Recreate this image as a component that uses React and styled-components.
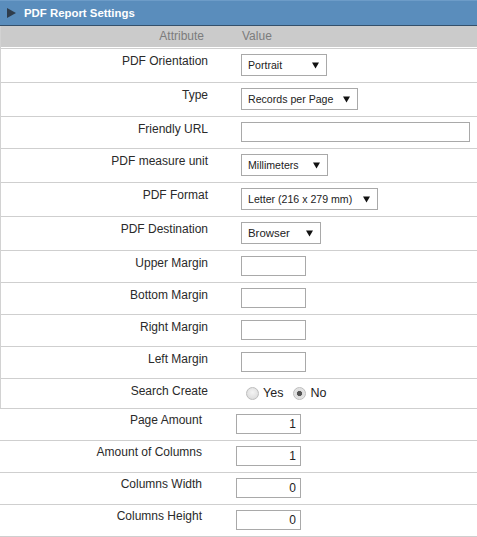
import React from "react";
import styled, { createGlobalStyle } from "styled-components";

const Global = createGlobalStyle`
  html, body { margin: 0; padding: 0; background: #ffffff; }
  body { font-family: "Liberation Sans", Arial, sans-serif; font-size: 12px; color: #222; }
`;

const Panel = styled.div`
  width: 477px;
`;

const TitleBar = styled.div`
  display: flex;
  align-items: center;
  gap: 8px;
  padding-left: 7px;
  background: #5a8dbc;
  border-top: 1px solid #6d9cc8;
  border-bottom: 1px solid #34506b;
  box-sizing: border-box;
  height: 26px;
`;

const TitleText = styled.span`
  color: #ffffff;
  font-weight: bold;
  font-size: 11.4px;
`;

const Grid = styled.div`
  display: grid;
  grid-template-columns: ${(p) => p.$label}px 1fr;
  border-left: ${(p) => (p.$framed ? "1px solid #d2d2d2" : "none")};
  border-bottom: ${(p) => (p.$closed ? "1px solid #cfcfcf" : "none")};
`;

const HeadCell = styled.div`
  background: #cbcbcb;
  color: #7c7c7c;
  height: 21px;
  line-height: 20px;
  border-bottom: 1px solid #ffffff;
  text-align: ${(p) => (p.$right ? "right" : "left")};
  padding: ${(p) => (p.$right ? "0 13px 0 0" : "0 0 0 25px")};
`;

const LabelCell = styled.div`
  border-top: 1px solid #cfcfcf;
  text-align: right;
  line-height: 14px;
  padding: ${(p) => p.$top}px ${(p) => p.$pr}px 0 0;
  color: #2a2a2a;
`;

const ValueCell = styled.div`
  border-top: 1px solid #cfcfcf;
  padding: 5px 6px 6px ${(p) => p.$pl}px;
  display: flex;
  align-items: center;
`;

const SelectBox = styled.div`
  box-sizing: border-box;
  width: ${(p) => p.$w}px;
  height: 22px;
  border: 1px solid #a9a9a9;
  background: #fff;
  display: flex;
  align-items: center;
  justify-content: space-between;
  padding: 0 7px 0 6px;
  font-size: ${(p) => p.$fs || 10.6}px;
  color: #222;
`;

const TextInput = styled.input`
  box-sizing: border-box;
  width: ${(p) => p.$w}px;
  height: 20px;
  border: 1px solid #a9a9a9;
  background: #fff;
  margin: 0;
  padding: 0 4px;
  font-family: "Liberation Sans", Arial, sans-serif;
  font-size: 12px;
  color: #222;
  text-align: ${(p) => (p.$num ? "right" : "left")};
  outline: none;
`;

const RadioGroup = styled.div`
  display: flex;
  align-items: center;
  height: 18px;
  padding-left: 5px;
  font-size: 12.5px;
  color: #222;
`;

const RadioLabel = styled.label`
  display: flex;
  align-items: center;
  gap: 4px;
  margin-right: 10px;
`;

const Radio = styled.input`
  appearance: none;
  -webkit-appearance: none;
  margin: 0;
  width: 13px;
  height: 13px;
  border-radius: 50%;
  border: 1px solid #bdbdbd;
  background: radial-gradient(circle at 50% 40%, #f4f4f4 0%, #d6d6d6 100%);
  box-sizing: border-box;
  &:checked {
    background: radial-gradient(circle, #555 0 2.3px, #dcdcdc 2.9px, #ececec 100%);
  }
`;

const Arrow = () => (
  <svg width="7" height="7" viewBox="0 0 7 7">
    <path d="M0 0.5 L7 0.5 L3.5 6.5 Z" fill="#111" />
  </svg>
);

const TitleArrow = () => (
  <svg width="9" height="10" viewBox="0 0 9 10">
    <path d="M0 0 L9 5 L0 10 Z" fill="#2f3d4c" />
  </svg>
);

const Select = ({ w, fs, children }) => (
  <SelectBox $w={w} $fs={fs}>
    <span>{children}</span>
    <Arrow />
  </SelectBox>
);

const upperRows = [
  { label: "PDF Orientation", el: <Select w={86}>Portrait</Select> },
  { label: "Type", el: <Select w={117}>Records per Page</Select> },
  { label: "Friendly URL", el: <TextInput $w={229} /> },
  { label: "PDF measure unit", el: <Select w={87}>Millimeters</Select> },
  { label: "PDF Format", el: <Select w={137}>Letter (216 x 279 mm)</Select> },
  { label: "PDF Destination", el: <Select w={80} fs={11.4}>Browser</Select> },
  { label: "Upper Margin", el: <TextInput $w={65} /> },
  { label: "Bottom Margin", el: <TextInput $w={65} /> },
  { label: "Right Margin", el: <TextInput $w={65} /> },
  { label: "Left Margin", el: <TextInput $w={65} /> },
  {
    label: "Search Create",
    el: (
      <RadioGroup>
        <RadioLabel>
          <Radio type="radio" name="sc" readOnly />
          Yes
        </RadioLabel>
        <RadioLabel>
          <Radio type="radio" name="sc" defaultChecked />
          No
        </RadioLabel>
      </RadioGroup>
    ),
  },
];

const lowerRows = [
  { label: "Page Amount", value: "1" },
  { label: "Amount of Columns", value: "1" },
  { label: "Columns Width", value: "0" },
  { label: "Columns Height", value: "0" },
];

export default function App() {
  return (
    <Panel>
      <Global />
      <TitleBar>
        <TitleArrow />
        <TitleText>PDF Report Settings</TitleText>
      </TitleBar>
      <Grid $label={216} $framed>
        <HeadCell $right>Attribute</HeadCell>
        <HeadCell>Value</HeadCell>
        {upperRows.map((r) => (
          <React.Fragment key={r.label}>
            <LabelCell $top={5} $pr={9}>{r.label}</LabelCell>
            <ValueCell $pl={24}>{r.el}</ValueCell>
          </React.Fragment>
        ))}
      </Grid>
      <Grid $label={210} $closed>
        {lowerRows.map((r) => (
          <React.Fragment key={r.label}>
            <LabelCell $top={4} $pr={8}>{r.label}</LabelCell>
            <ValueCell $pl={26}>
              <TextInput $w={65} $num defaultValue={r.value} />
            </ValueCell>
          </React.Fragment>
        ))}
      </Grid>
    </Panel>
  );
}
